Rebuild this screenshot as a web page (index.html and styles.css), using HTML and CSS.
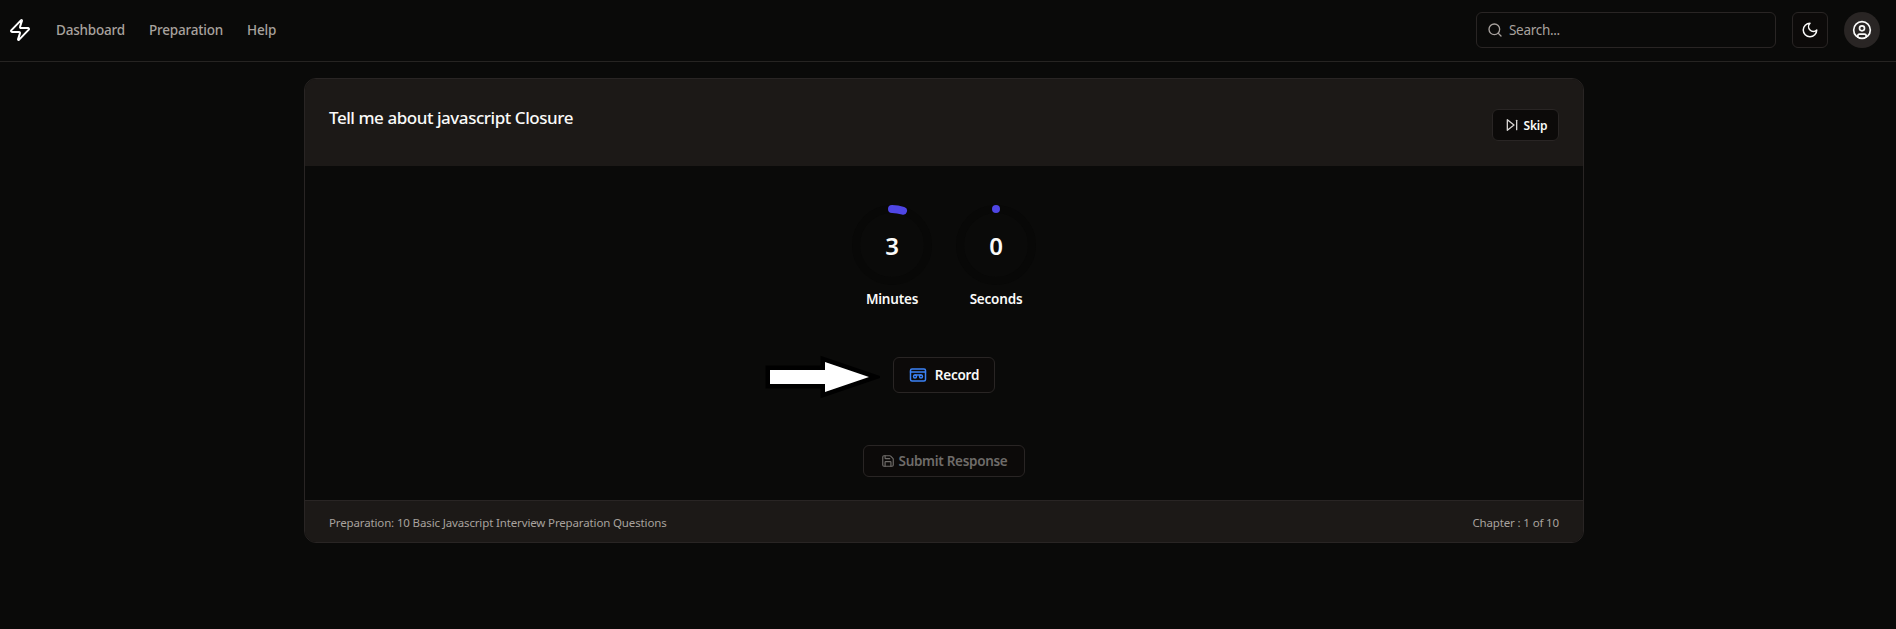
FILE: index.html
```html
<!DOCTYPE html>
<html lang="en">
<head>
<meta charset="utf-8">
<title>Interview</title>
<link rel="stylesheet" href="styles.css">
</head>
<body>
<header class="topbar">
  <div class="nav-left">
    <svg class="logo" viewBox="0 0 24 24" fill="none" stroke="currentColor" stroke-width="2" stroke-linecap="round" stroke-linejoin="round"><path d="M4 14a1 1 0 0 1-.78-1.63l9.9-10.2a.5.5 0 0 1 .86.46l-1.92 6.02A1 1 0 0 0 13 10h7a1 1 0 0 1 .78 1.63l-9.9 10.2a.5.5 0 0 1-.86-.46l1.92-6.02A1 1 0 0 0 11 14z"/></svg>
    <nav class="nav-links"><a>Dashboard</a><a>Preparation</a><a>Help</a></nav>
  </div>
  <div class="nav-right">
    <div class="search">
      <svg class="search-icon" viewBox="0 0 24 24" fill="none" stroke="currentColor" stroke-width="2" stroke-linecap="round" stroke-linejoin="round"><circle cx="11" cy="11" r="8"/><path d="m21 21-4.3-4.3"/></svg>
      <span>Search...</span>
    </div>
    <button class="icon-btn"><svg viewBox="0 0 24 24" fill="none" stroke="currentColor" stroke-width="2" stroke-linecap="round" stroke-linejoin="round"><path d="M12 3a6 6 0 0 0 9 9 9 9 0 1 1-9-9Z"/></svg></button>
    <div class="avatar"><svg viewBox="0 0 24 24" fill="none" stroke="currentColor" stroke-width="2" stroke-linecap="round" stroke-linejoin="round"><circle cx="12" cy="12" r="10"/><circle cx="12" cy="10" r="3"/><path d="M7 20.662V19a2 2 0 0 1 2-2h6a2 2 0 0 1 2 2v1.662"/></svg></div>
  </div>
</header>
<main class="page">
  <section class="card">
    <div class="card-head">
      <h1>Tell me about javascript Closure</h1>
      <button class="skip"><svg viewBox="0 0 24 24" fill="none" stroke="currentColor" stroke-width="2" stroke-linecap="round" stroke-linejoin="round"><polygon points="5 4 15 12 5 20 5 4"/><line x1="19" x2="19" y1="5" y2="19"/></svg>Skip</button>
    </div>
    <div class="card-body">
      <div class="timers">
        <div class="timer">
          <div class="ring">
            <svg viewBox="0 0 80 80"><circle class="track" cx="40" cy="40" r="36"/><path class="arc" d="M40 4 A36 36 0 0 1 51 5.700"/></svg>
            <span>3</span>
          </div>
          <div class="label">Minutes</div>
        </div>
        <div class="timer">
          <div class="ring">
            <svg viewBox="0 0 80 80"><circle class="track" cx="40" cy="40" r="36"/><path class="arc" d="M40 4 L40 4.010"/></svg>
            <span>0</span>
          </div>
          <div class="label">Seconds</div>
        </div>
      </div>
      <div class="record-row">
        <svg class="pointer" viewBox="0 0 115 44"><path d="M5 15H60V7L104 22 60 37V29H5Z" fill="#fff" stroke="#000" stroke-width="9" paint-order="stroke"/></svg>
        <button class="record"><svg viewBox="0 0 24 24" fill="none" stroke="currentColor" stroke-width="2" stroke-linecap="round" stroke-linejoin="round"><rect x="2" y="4" width="20" height="16" rx="2"/><path d="M2 8h20"/><circle cx="8" cy="14" r="2"/><path d="M8 12h8"/><circle cx="16" cy="14" r="2"/></svg><span>Record</span></button>
      </div>
      <button class="submit"><svg viewBox="0 0 24 24" fill="none" stroke="currentColor" stroke-width="2" stroke-linecap="round" stroke-linejoin="round"><path d="M15.200 3a2 2 0 0 1 1.400.6l3.800 3.800a2 2 0 0 1 .6 1.400V19a2 2 0 0 1-2 2H5a2 2 0 0 1-2-2V5a2 2 0 0 1 2-2z"/><path d="M17 21v-7a1 1 0 0 0-1-1H8a1 1 0 0 0-1 1v7"/><path d="M7 3v4a1 1 0 0 0 1 1h7"/></svg>Submit Response</button>
    </div>
    <div class="card-foot">
      <span>Preparation: 10 Basic Javascript Interview Preparation Questions</span>
      <span>Chapter : 1 of 10</span>
    </div>
  </section>
</main>
</body>
</html>
```
FILE: styles.css
```css
* { box-sizing: border-box; }
html, body { margin: 0; height: 100%; }
body {
  background: #0a0a09;
  color: #fafaf9;
  font-family: "Noto Sans", "Open Sans", sans-serif;
  overflow: hidden;
}
button { font-family: inherit; cursor: pointer; }

.topbar {
  height: 62px;
  border-bottom: 1px solid #262422;
  display: flex;
  align-items: center;
  justify-content: space-between;
  padding: 0 16px 1px 8px;
}
.nav-left { display: flex; align-items: center; }
.logo { width: 24px; height: 24px; color: #fff; margin-right: 24px; }
.nav-links { display: flex; gap: 24px; font-size: 13.500px; font-weight: 500; color: #a8a29e; letter-spacing: -0.2px; }
.nav-right { display: flex; align-items: center; }
.search {
  width: 300px; height: 36px;
  border: 1px solid #292524; border-radius: 6px;
  display: flex; align-items: center;
  padding-left: 10px; gap: 6px;
  font-size: 13.500px; color: #a8a29e; letter-spacing: -0.3px;
}
.search-icon { width: 16px; height: 16px; }
.icon-btn {
  width: 36px; height: 36px; margin-left: 16px;
  background: #0c0a09; border: 1px solid #292524; border-radius: 6px;
  color: #fafaf9; display: flex; align-items: center; justify-content: center; padding: 0;
}
.icon-btn svg { width: 18px; height: 18px; }
.avatar {
  width: 36px; height: 36px; margin-left: 16px; border-radius: 50%;
  background: #292524; color: #fafaf9;
  display: flex; align-items: center; justify-content: center;
}
.avatar svg { width: 20px; height: 20px; }

.page { padding: 16px 8px 0 0; display: flex; justify-content: center; }
.card {
  width: 1280px; height: 465px;
  border: 1px solid #292524; border-radius: 12px;
  overflow: hidden;
  display: flex; flex-direction: column;
}
.card-head {
  height: 87px; flex: none;
  background: #1c1917;
  padding: 24px 24px 0;
  display: flex; justify-content: space-between; align-items: flex-start;
}
h1 { margin: 0; font-size: 17px; line-height: 29px; font-weight: 500; color: #fafaf9; letter-spacing: -0.45px; }
.skip {
  margin-top: 6px; height: 32px; width: 67px;
  background: #0c0a09; border: 1px solid #292524; border-radius: 6px;
  color: #fafaf9; font-size: 12px; font-weight: 600; letter-spacing: -0.2px;
  display: flex; align-items: center; justify-content: center; gap: 4px; padding: 0;
}
.skip svg { width: 16px; height: 16px; color: #d6d3d1; }

.card-body { flex: 1; display: flex; flex-direction: column; align-items: center; }
.timers { display: flex; gap: 24px; margin-top: 39px; }
.timer { width: 80px; display: flex; flex-direction: column; align-items: center; }
.ring { position: relative; width: 80px; height: 80px; display: flex; align-items: center; justify-content: center; }
.ring svg { position: absolute; inset: 0; width: 80px; height: 80px; }
.ring span { font-size: 24px; font-weight: 600; position: relative; }
.track { fill: none; stroke: #080807; stroke-width: 8; }
.arc { fill: none; stroke: #4f46e5; stroke-width: 8; stroke-linecap: round; }
.label { font-size: 13.500px; font-weight: 600; line-height: 20px; margin-top: 4px; letter-spacing: -0.2px; }

.record-row { position: relative; margin-top: 48px; }
.pointer { position: absolute; right: 100%; top: -2px; width: 115px; height: 44px; margin-right: 13px; }
.record {
  width: 102px; height: 36px;
  background: #0c0a09; border: 1px solid #292524; border-radius: 6px;
  color: #fafaf9; font-size: 13.500px; font-weight: 600; letter-spacing: -0.2px;
  display: flex; align-items: center; justify-content: center; gap: 8px; padding: 0;
}
.record svg { width: 18px; height: 18px; color: #3b82f6; }
.submit {
  margin-top: 52px; width: 162px; height: 32px;
  background: #0c0a09; border: 1px solid #292524; border-radius: 6px;
  color: #6f6c69; font-size: 13.500px; font-weight: 600; letter-spacing: -0.3px;
  display: flex; align-items: center; justify-content: center; gap: 4px; padding: 0;
}
.submit svg { width: 14px; height: 14px; }

.card-foot {
  height: 42px; flex: none;
  background: #1c1917; border-top: 1px solid #292524;
  padding: 2px 24px 0;
  display: flex; align-items: center; justify-content: space-between;
  font-size: 11.500px; color: #a8a29e; letter-spacing: -0.14px;
}
```
